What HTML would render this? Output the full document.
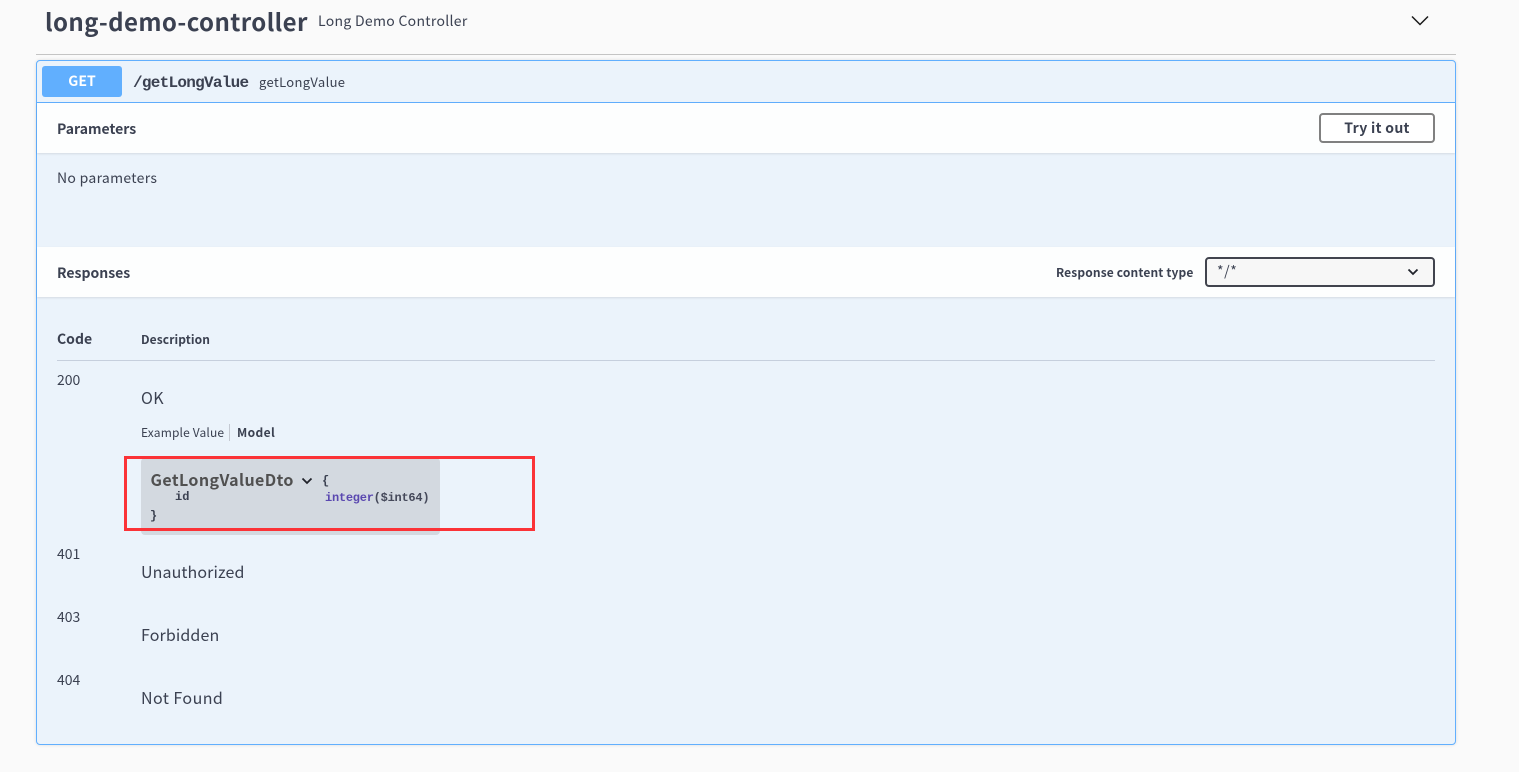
<!DOCTYPE html>
<html><head><meta charset="utf-8"><style>
html,body{margin:0;padding:0;width:1519px;height:772px;overflow:hidden;background:#fafafa}
body{position:relative;font-family:"Noto Sans CJK SC","Liberation Sans",sans-serif;color:#3b4151}
.a{position:absolute;white-space:nowrap;line-height:20px}
.b{font-weight:700}
.m{font-family:"Liberation Mono",monospace;font-weight:700}
</style></head><body>
<div class="a b" style="left:45px;top:6px;font-size:24px;line-height:30px;font-weight:700;letter-spacing:.4px" id="t">long-demo-controller</div>
<div class="a" style="left:318px;top:11px;font-size:14px;letter-spacing:.3px">Long Demo Controller</div>
<svg class="a" style="left:1410px;top:14px" width="20" height="14" viewBox="0 0 20 14"><path d="M2 2.500 L10 10.500 L18 2.500" fill="none" stroke="#1a1a1a" stroke-width="1.500"/></svg>
<div class="a" style="left:36px;top:54px;width:1420px;height:1px;background:#c4c4c4"></div>
<div class="a" style="left:36px;top:60px;width:1418px;height:683px;border:1px solid #61affe;border-radius:4px;background:#ebf3fb;box-shadow:0 0 3px rgba(0,0,0,.12)"></div>
<div class="a" style="left:37px;top:102px;width:1418px;height:1px;background:#61affe"></div>
<div class="a b" style="left:42px;top:66px;width:80px;height:31px;background:#61affe;border-radius:3px;color:#fff;font-size:14px;line-height:31px;text-align:center">GET</div>
<div class="a m" style="left:133px;top:73px;font-size:16px;letter-spacing:-.73px">/getLongValue</div>
<div class="a" style="left:259px;top:72px;font-size:13px;letter-spacing:.33px">getLongValue</div>
<div class="a" style="left:37px;top:103px;width:1418px;height:50px;background:#fdfefe;box-shadow:0 1px 2px rgba(0,0,0,.1)"></div>
<div class="a b" style="left:57px;top:119px;font-size:14px">Parameters</div>
<div class="a b" style="left:1319px;top:113px;width:112px;height:26px;border:2px solid #808080;border-radius:4px;font-size:14px;line-height:26px;text-align:center;background:#fff;letter-spacing:.3px">Try it out</div>
<div class="a" style="left:57px;top:168px;font-size:14px;letter-spacing:.3px">No parameters</div>
<div class="a" style="left:37px;top:247px;width:1418px;height:50px;background:#fdfefe;box-shadow:0 1px 2px rgba(0,0,0,.1)"></div>
<div class="a b" style="left:57px;top:263px;font-size:14px">Responses</div>
<div class="a b" style="left:1056px;top:263px;font-size:12px;letter-spacing:.14px">Response content type</div>
<div class="a" style="left:1205px;top:257px;width:226px;height:26px;border:2px solid #41444e;border-radius:4px;background:#f7f7f7;font-size:14px;line-height:24px;text-indent:10px;letter-spacing:.6px">*/*</div>
<svg class="a" style="left:1406px;top:266px" width="14" height="12" viewBox="0 0 14 12"><path d="M2.500 3.500 L7 8 L11.500 3.500" fill="none" stroke="#20232b" stroke-width="1.800"/></svg>
<div class="a b" style="left:57px;top:329px;font-size:14px">Code</div>
<div class="a b" style="left:141px;top:330px;font-size:12px;letter-spacing:.1px">Description</div>
<div class="a" style="left:57px;top:360px;width:1378px;height:1px;background:#c6cfdd"></div>
<div class="a" style="left:57px;top:370px;font-size:14px">200</div>
<div class="a" style="left:141px;top:387px;font-size:16px;letter-spacing:.4px">OK</div>
<div class="a" style="left:141px;top:423px;font-size:12px;letter-spacing:.15px">Example Value</div>
<div class="a" style="left:229px;top:424px;width:1px;height:17px;background:#c4c9d2"></div>
<div class="a b" style="left:237px;top:423px;font-size:12px;letter-spacing:.4px">Model</div>
<div class="a" style="left:141px;top:458px;width:299px;height:77px;background:#d3d9e0;border-radius:4px"></div>
<div class="a b" style="left:150.500px;top:469px;font-size:16px;color:#505050;letter-spacing:.4px">GetLongValueDto</div>
<svg class="a" style="left:300px;top:475px" width="14" height="12" viewBox="0 0 14 12"><path d="M2.500 3.500 L7 8 L11.500 3.500" fill="none" stroke="#20232b" stroke-width="1.800"/></svg>
<div class="a m" style="left:322px;top:471px;font-size:12px">{</div>
<div class="a m" style="left:175px;top:487px;font-size:12px">id</div>
<div class="a m" style="left:325px;top:488px;font-size:12px;letter-spacing:-.25px;color:#55a"><span style="color:#5a48b0">integer</span><span style="color:#45495a">($int64)</span></div>
<div class="a m" style="left:150px;top:506px;font-size:12px">}</div>
<div class="a" style="left:124px;top:456px;width:405px;height:69px;border:3px solid #fb3237"></div>
<div class="a" style="left:57px;top:544px;font-size:14px">401</div>
<div class="a" style="left:141px;top:561px;font-size:16px;letter-spacing:.1px">Unauthorized</div>
<div class="a" style="left:57px;top:607px;font-size:14px">403</div>
<div class="a" style="left:141px;top:624px;font-size:16px;letter-spacing:.12px">Forbidden</div>
<div class="a" style="left:57px;top:670px;font-size:14px">404</div>
<div class="a" style="left:141px;top:687px;font-size:16px;letter-spacing:.45px">Not Found</div>
</body></html>
